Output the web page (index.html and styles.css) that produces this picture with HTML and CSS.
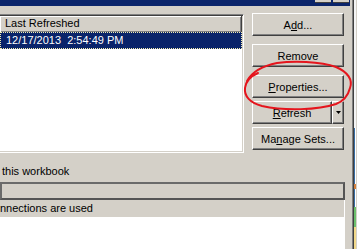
FILE: index.html
```html
<!DOCTYPE html>
<html lang="en">
<head>
    <meta charset="UTF-8">
    <title>Workbook Connections</title>
    <link rel="stylesheet" href="styles.css">
</head>
<body>
    <div class="screen">
        <!-- Janela do diálogo -->
        <div class="window">
            <div class="titlebar">
                <span class="cap"></span>
                <span class="cap"></span>
            </div>

            <div class="top-row">
                <div class="listbox">
                    <div class="lv-header"><span class="col">Last Refreshed</span></div>
                    <div class="lv-row selected">12/17/2013&nbsp; 2:54:49 PM</div>
                </div>

                <div class="buttons">
                    <button class="btn btn-add">A<u>d</u>d...</button>
                    <button class="btn btn-gap">Remove</button>
                    <button class="btn btn-gap"><u>P</u>roperties...</button>
                    <div class="split">
                        <button class="btn split-main"><u>R</u>efresh</button>
                        <button class="btn split-arrow">
                            <svg width="5" height="3" viewBox="0 0 5 3"><path d="M0 0h5L2.5 3z" fill="#000"/></svg>
                        </button>
                    </div>
                    <button class="btn btn-close">Ma<u>n</u>age Sets...</button>
                </div>
            </div>

            <div class="section-label">this workbook</div>

            <div class="usage">
                <div class="usage-bar"></div>
                <div class="usage-label">nnections are used</div>
                <div class="usage-list"></div>
            </div>
        </div>

        <!-- Planilha atrás do diálogo -->
        <div class="behind">
            <div class="sheet-top"></div>
            <div class="sheet-line"></div>
            <div class="sheet-dot"></div>
            <div class="sheet-line short"></div>
            <div class="sheet-green"></div>
            <div class="sheet-yellow"></div>
        </div>

        <!-- Marcação em vermelho -->
        <svg class="markup" width="357" height="249" viewBox="0 0 357 249">
            <path d="M247 81 C252 72, 262 66, 277 63 C292 61, 320 61, 336 67 C348 72, 353 80, 350 88 C348 96, 344 101, 336 104 C318 110, 285 111, 262 106 C250 103, 244 96, 245 88 C246 81, 251 76, 258 73"
                  fill="none" stroke="#e5151d" stroke-width="2" stroke-linecap="round"/>
        </svg>
    </div>
</body>
</html>
```

FILE: styles.css
```css
body {
    margin: 0;
    background-color: #d4d0c8;
    font-family: "Liberation Sans", Arial, sans-serif;
    font-size: 11px;
    color: #000;
}

.screen {
    position: relative;
    display: flex;
    width: 357px;
    height: 249px;
    overflow: hidden;
}

.window {
    width: 350px;
    padding-right: 3px;
    border-right: 1px solid #404040;
    box-shadow: inset -1px 0 0 #808080;
    background-color: #d4d0c8;
    flex-shrink: 0;
}

.titlebar {
    height: 6px;
    background-color: #0a246a;
    display: flex;
    justify-content: flex-end;
    gap: 2px;
    padding-right: 1px;
}

.cap {
    width: 16px;
    height: 2px;
    background-color: #d4d0c8;
    border-bottom: 1px solid #404040;
}

.top-row {
    display: flex;
    padding-top: 7px;
    gap: 8px;
}

.listbox {
    width: 242px;
    height: 136px;
    margin-top: 1px;
    padding-top: 1px;
    padding-right: 1px;
    background-color: #fff;
    border-top: 1px solid #808080;
    border-right: 1px solid #fff;
    border-bottom: 1px solid #fff;
    box-shadow: inset 0 1px 0 #404040, inset -1px -1px 0 #d4d0c8;
}

.lv-header {
    height: 16px;
    background-color: #d4d0c8;
    border-right: 1px solid #404040;
    box-shadow: inset 1px 1px 0 #fff, inset -1px -1px 0 #808080;
    box-sizing: border-box;
    line-height: 15px;
}

.lv-header .col {
    padding-left: 5px;
}

.lv-row {
    height: 17px;
    line-height: 15px;
    padding-left: 5px;
    box-sizing: border-box;
}

.lv-row.selected {
    background-color: #0a246a;
    color: #fff;
    border: 1px dotted #f3eeb0;
}

.buttons {
    display: flex;
    flex-direction: column;
    width: 92px;
}

.btn {
    height: 23px;
    padding: 0;
    margin: 0;
    font-family: inherit;
    font-size: 11px;
    color: #000;
    background-color: #d4d0c8;
    border: 1px solid;
    border-color: #fff #404040 #404040 #fff;
    box-shadow: inset -1px -1px 0 #808080;
    border-radius: 0;
    cursor: pointer;
}

.btn-gap {
    margin-top: 8px;
}

.split {
    display: flex;
    margin-top: 3px;
    gap: 0;
}

.split-main {
    width: 80px;
}

.split-arrow {
    width: 12px;
    display: flex;
    align-items: center;
    justify-content: center;
}

.btn-close {
    margin-top: 3px;
}

.section-label {
    margin-top: 11px;
    height: 14px;
    line-height: 14px;
    padding-left: 2px;
}

.usage {
    margin-top: 4px;
    width: 344px;
    border-right: 1px solid #fff;
}

.usage-bar {
    height: 14px;
    width: 341px;
    border: 2px solid;
    border-color: #6a6a6a #555 #555 #6a6a6a;
    background-color: #d4d0c8;
}

.usage-label {
    height: 17px;
    line-height: 17px;
}

.usage-list {
    height: 40px;
    background-color: #fff;
}

.behind {
    width: 2px;
    display: flex;
    flex-direction: column;
    background-color: #fff;
}

.sheet-top {
    height: 128px;
    background-color: #f4f4f4;
}

.sheet-line {
    height: 56px;
    border-left: 1px solid #3a6ea5;
}

.sheet-line.short {
    height: 18px;
}

.sheet-dot {
    height: 5px;
    background-color: #d08040;
}

.sheet-green {
    height: 20px;
    background-color: #6cbf6c;
}

.sheet-yellow {
    flex: 1;
    background-color: #f2d98a;
}

.markup {
    position: absolute;
    left: 0;
    top: 0;
    pointer-events: none;
}
```
